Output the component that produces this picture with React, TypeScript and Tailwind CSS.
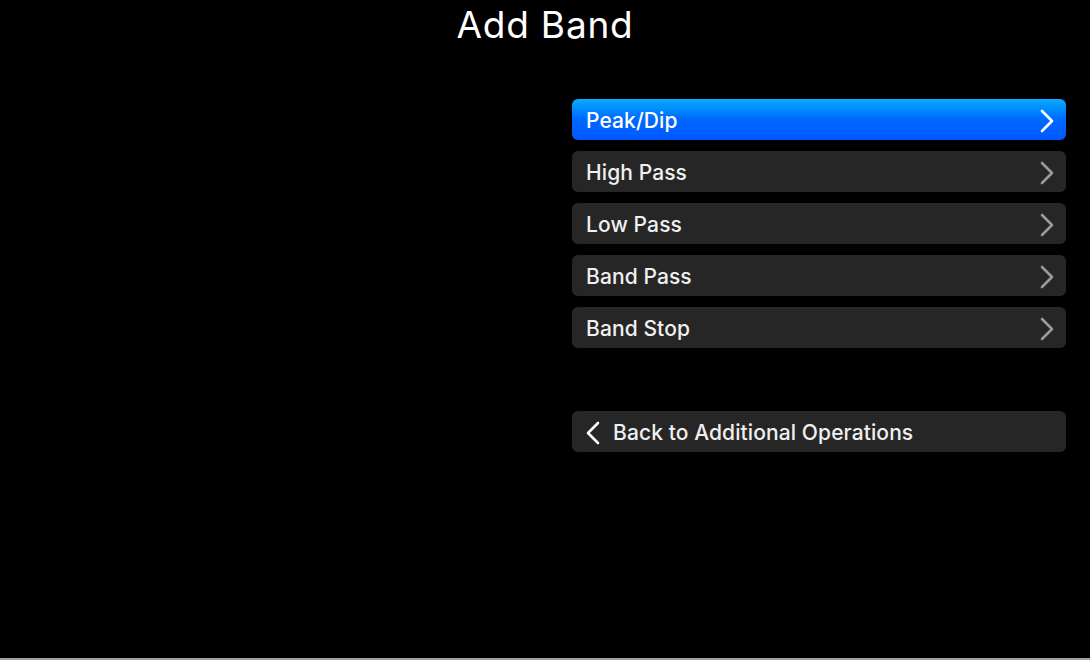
import React from 'react';

const items = ['Peak/Dip', 'High Pass', 'Low Pass', 'Band Pass', 'Band Stop'];

function Chevron({ dir, className }: { dir: 'left' | 'right'; className?: string }) {
  return (
    <svg width="18" height="26" viewBox="0 0 18 26" className={className} fill="none" stroke="currentColor" strokeWidth="2.6" strokeLinecap="round" strokeLinejoin="round">
      {dir === 'right' ? <path d="M4 3l10 10-10 10" /> : <path d="M14 3L4 13l10 10" />}
    </svg>
  );
}

export default function App() {
  return (
    <div className="w-[1090px] h-[660px] bg-black flex flex-col text-white" style={{ fontFamily: 'Inter, "Noto Sans", sans-serif' }}>
      <div className="flex-1 flex flex-col">
        <h1 className="text-[37px] leading-[50px] tracking-[0.8px] text-center font-normal">Add Band</h1>
        <div className="flex justify-end pr-[24px] mt-[49px]">
          <div className="w-[494px] flex flex-col">
            <div className="flex flex-col gap-[11px]">
              {items.map((item, i) => (
                <div
                  key={item}
                  className={
                    i === 0
                      ? 'h-[41px] rounded-[6px] flex items-center justify-between pl-[14px] pr-[10px] pt-[2px] bg-gradient-to-b from-[#14aaff] via-[#0068ff] to-[#0058ff] text-white'
                      : 'h-[41px] rounded-[6px] flex items-center justify-between pl-[14px] pr-[10px] pt-[2px] bg-[#262626] text-[#f0f0f0]'
                  }
                >
                  <span className="text-[21px] tracking-[0.1px] font-medium">{item}</span>
                  <Chevron dir="right" className={i === 0 ? 'text-white' : 'text-[#9a9a9a]'} />
                </div>
              ))}
            </div>
            <div className="h-[41px] mt-[63px] rounded-[6px] flex items-center pl-[12px] pt-[2px] gap-[11px] bg-[#262626] text-[#f0f0f0]">
              <Chevron dir="left" className="text-white" />
              <span className="text-[21px] tracking-[0.1px] font-medium">Back to Additional Operations</span>
            </div>
          </div>
        </div>
      </div>
      <div className="h-[2px] bg-[#a0a0a0]" />
    </div>
  );
}
